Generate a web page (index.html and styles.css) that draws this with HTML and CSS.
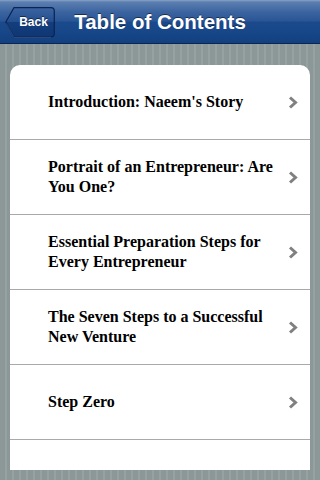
FILE: index.html
```html
<!DOCTYPE html>
<html>
<head>
<meta charset="utf-8">
<link rel="stylesheet" href="styles.css">
</head>
<body>
<div class="navbar">
  <button class="back">
    <svg class="back-shape" width="50" height="31" viewBox="0 0 50 31">
      <defs>
        <linearGradient id="bg" x1="0" y1="0" x2="0" y2="1">
          <stop offset="0" stop-color="#3c64a0"/>
          <stop offset="0.48" stop-color="#234f90"/>
          <stop offset="0.5" stop-color="#133d7c"/>
          <stop offset="1" stop-color="#0f3774"/>
        </linearGradient>
      </defs>
      <path d="M0.8 15 L9 0.7 H46 Q49.3 0.7 49.3 4 V26.5 Q49.3 29.8 46 29.8 H9 Z" fill="url(#bg)" stroke="#0a2453" stroke-width="1.2"/>
      <path d="M1.5 16.5 L9 30.3 H46" fill="none" stroke="rgba(255,255,255,0.18)" stroke-width="0.8"/>
    </svg>
    <span class="back-text">Back</span>
  </button>
  <div class="title">Table of Contents</div>
</div>
<div class="content">
  <ul class="card">
    <li class="row"><span class="label">Introduction: Naeem's Story</span><svg class="chev" width="10" height="13" viewBox="0 0 10 13"><path d="M2 1.5 L7.5 6.5 L2 11.5" fill="none" stroke="#808080" stroke-width="3"/></svg></li>
    <li class="row"><span class="label">Portrait of an Entrepreneur: Are You One?</span><svg class="chev" width="10" height="13" viewBox="0 0 10 13"><path d="M2 1.5 L7.5 6.5 L2 11.5" fill="none" stroke="#808080" stroke-width="3"/></svg></li>
    <li class="row"><span class="label">Essential Preparation Steps for Every Entrepreneur</span><svg class="chev" width="10" height="13" viewBox="0 0 10 13"><path d="M2 1.5 L7.5 6.5 L2 11.5" fill="none" stroke="#808080" stroke-width="3"/></svg></li>
    <li class="row"><span class="label">The Seven Steps to a Successful New Venture</span><svg class="chev" width="10" height="13" viewBox="0 0 10 13"><path d="M2 1.5 L7.5 6.5 L2 11.5" fill="none" stroke="#808080" stroke-width="3"/></svg></li>
    <li class="row"><span class="label">Step Zero</span><svg class="chev" width="10" height="13" viewBox="0 0 10 13"><path d="M2 1.5 L7.5 6.5 L2 11.5" fill="none" stroke="#808080" stroke-width="3"/></svg></li>
  </ul>
</div>
</body>
</html>
```
FILE: styles.css
```css
html, body {
  margin: 0;
  padding: 0;
  width: 320px;
  height: 480px;
  overflow: hidden;
}
html {
  background: #8e9b9a;
}
body {
  background-color: #8e9b9a;
  background-image: repeating-linear-gradient(90deg, #8b9897 0px, #8b9897 5px, #95a2a1 5px, #95a2a1 7px);
  font-family: "Liberation Serif", "Times New Roman", serif;
  display: flex;
  flex-direction: column;
}
.navbar {
  flex: none;
  height: 43px;
  border-bottom: 1px solid #0b2656;
  background: linear-gradient(to bottom, #8aa3c6 0px, #5c7fb1 2px, #3b649f 12px, #2a5696 21px, #1a4a8c 22px, #174689 32px, #12407f 43px);
  display: flex;
  align-items: center;
  justify-content: center;
  position: relative;
}
.title {
  font-family: "Liberation Sans", Arial, sans-serif;
  font-weight: bold;
  font-size: 20.5px;
  color: #fff;
  text-shadow: 0 -1px 0 rgba(0,0,0,0.5);
}
.back {
  position: absolute;
  left: 4.5px;
  top: 6.5px;
  width: 50px;
  height: 31px;
  padding: 0;
  border: none;
  background: none;
}
.back-shape {
  position: absolute;
  left: 0;
  top: 0;
}
.back-text {
  position: absolute;
  left: 12px;
  top: 0;
  width: 34px;
  line-height: 30px;
  text-align: center;
  color: #fff;
  font-family: "Liberation Sans", Arial, sans-serif;
  font-weight: bold;
  font-size: 12px;
  text-shadow: 0 -1px 0 rgba(0,0,0,0.5);
}
.content {
  flex: none;
  box-sizing: border-box;
  height: 436px;
  padding: 21px 10px 10px 10px;
  display: flex;
  flex-direction: column;
}
.card {
  flex: 1;
  list-style: none;
  margin: 0;
  padding: 0;
  background: #fff;
  border-radius: 10px 10px 0 0;
  overflow: hidden;
}
.row {
  height: 74px;
  border-bottom: 1px solid #a9a9a9;
  display: flex;
  align-items: center;
  padding: 0 12px 0 38px;
}
.label {
  flex: 1;
  font-weight: bold;
  font-size: 16px;
  line-height: 20px;
  color: #000;
  padding-right: 8px;
}
.chev {
  flex: none;
  margin-top: 1px;
}
```
